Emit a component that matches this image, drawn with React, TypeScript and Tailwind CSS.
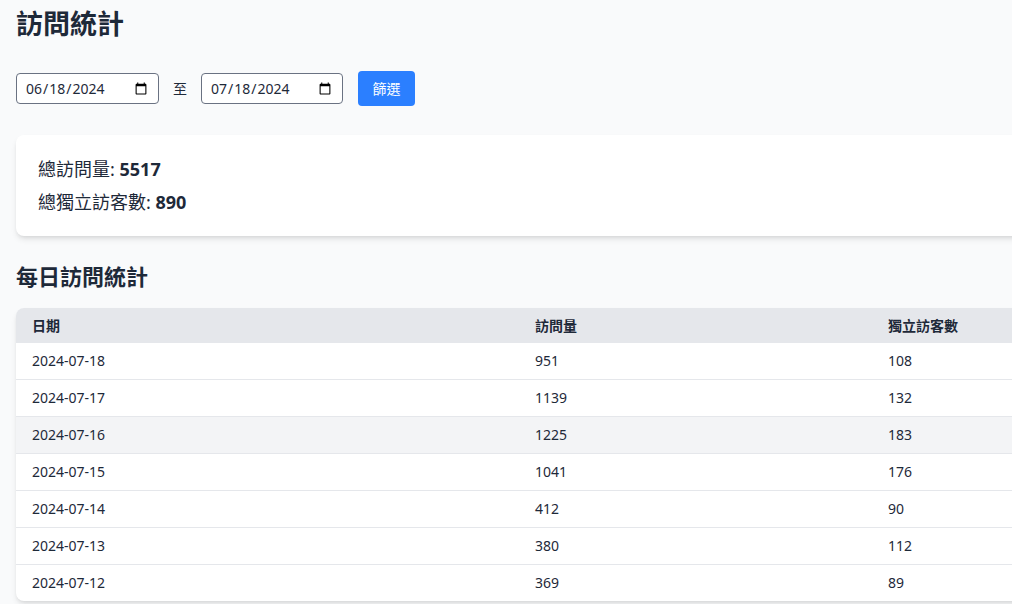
import React from 'react';

const rows = [
  { date: '2024-07-18', visits: 951, unique: 108 },
  { date: '2024-07-17', visits: 1139, unique: 132 },
  { date: '2024-07-16', visits: 1225, unique: 183 },
  { date: '2024-07-15', visits: 1041, unique: 176 },
  { date: '2024-07-14', visits: 412, unique: 90 },
  { date: '2024-07-13', visits: 380, unique: 112 },
  { date: '2024-07-12', visits: 369, unique: 89 },
];

export default function App() {
  return (
    <div className="h-[604px] w-full overflow-hidden bg-gray-50 font-['Noto_Sans','Noto_Sans_CJK_TC',sans-serif] text-gray-800">
      <div className="w-[1200px] px-4 pt-1">
        <h1 className="text-[27px] font-bold leading-[40px]">訪問統計</h1>

        {/* Date filter */}
        <div className="mt-[27px] flex items-center gap-[15px]">
          <input
            type="date"
            defaultValue="2024-06-18"
            className="h-[31px] w-[143px] rounded border border-gray-500 bg-white px-2 text-sm"
          />
          <span className="-mx-px text-sm">至</span>
          <input
            type="date"
            defaultValue="2024-07-18"
            className="h-[31px] w-[142px] rounded border border-gray-500 bg-white px-2 text-sm"
          />
          <button className="h-[35px] w-[57px] rounded bg-blue-500 text-sm text-white">篩選</button>
        </div>

        {/* Totals */}
        <div className="mt-[29px] rounded-lg bg-white px-[22px] py-5 shadow-md">
          <p className="text-lg leading-7">
            總訪問量: <span className="font-bold">5517</span>
          </p>
          <p className="mt-[5px] text-lg leading-7">
            總獨立訪客數: <span className="font-bold">890</span>
          </p>
        </div>

        {/* Daily table */}
        <h2 className="mt-6 text-[22px] font-bold leading-8">每日訪問統計</h2>
        <div className="mt-4 overflow-hidden rounded-lg bg-white shadow-md">
          <table className="w-full text-left text-sm">
            <thead className="bg-gray-200">
              <tr>
                <th className="h-[35px] w-[503px] px-4 font-semibold">日期</th>
                <th className="h-[35px] w-[353px] px-4 font-semibold">訪問量</th>
                <th className="h-[35px] px-4 font-semibold">獨立訪客數</th>
              </tr>
            </thead>
            <tbody>
              {rows.map((r, i) => (
                <tr
                  key={r.date}
                  className={`${i < rows.length - 1 ? 'border-b border-gray-200' : ''} ${i === 2 ? 'bg-gray-100' : ''}`}
                >
                  <td className="px-4 py-2">{r.date}</td>
                  <td className="px-4 py-2">{r.visits}</td>
                  <td className="px-4 py-2">{r.unique}</td>
                </tr>
              ))}
            </tbody>
          </table>
        </div>
      </div>
    </div>
  );
}
